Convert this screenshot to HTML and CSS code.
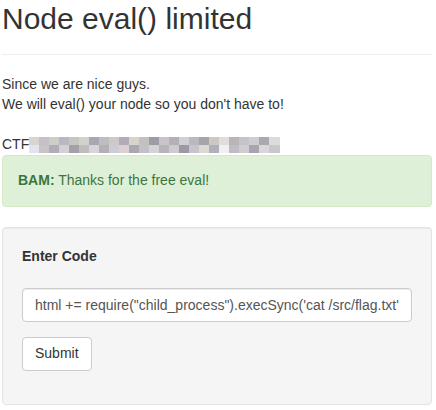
FILE: index.html
```html
<!DOCTYPE html>
<html lang="en">
<head>
<meta charset="utf-8">
<title>Node eval() limited</title>
<link rel="stylesheet" href="styles.css">
</head>
<body>
<div class="container">
  <div class="page-header">
    <h1 class="title">Node eval() limited</h1>
  </div>
  <p class="intro">Since we are nice guys.<br>We will eval() your node so you don't have to!</p>
  <p class="flag">CTF<span class="redacted"></span></p>
  <div class="alert"><strong>BAM:</strong> Thanks for the free eval!</div>
  <div class="well">
    <form class="code-form">
      <label class="field-label" for="code">Enter Code</label>
      <input class="field-input" id="code" type="text" value="html += require(&quot;child_process&quot;).execSync('cat /src/flag.txt')">
      <div class="actions">
        <button class="btn" type="button">Submit</button>
      </div>
    </form>
  </div>
</div>
</body>
</html>
```
FILE: styles.css
```css
html, body {
  margin: 0;
  padding: 0;
  background: #fff;
}
body {
  font-family: "Liberation Sans", Arial, Helvetica, sans-serif;
  font-size: 14px;
  line-height: 1.42857;
  color: #333;
}
.container {
  width: 430px;
  padding: 0 4px 0 2px;
}
.page-header {
  padding: 2px 0 9px;
  margin: 0 0 20px;
  border-bottom: 1px solid #eee;
}
.title {
  margin: 0 0 10px;
  font-size: 30px;
  font-weight: normal;
  line-height: 1.1;
  color: #333;
}
.intro {
  margin: 0;
}
.flag {
  margin: 20px 0 0;
  height: 20px;
}
.redacted {
  display: inline-block;
  vertical-align: top;
  margin-top: 2px;
  width: 251px;
  height: 16px;
  background:
    linear-gradient(to right,
      #d8d4d4 0 10px, #c4c0c8 10px 20px, #d0cccc 20px 30px, #b8b8c4 30px 40px,
      #c8c4c0 40px 50px, #d4d0cc 50px 60px, #a8a8b4 60px 70px, #c0bcc0 70px 80px,
      #ccc8cc 80px 90px, #b0acb8 90px 100px, #d8d4cc 100px 110px, #c4c0bc 110px 120px,
      #9c9ca8 120px 130px, #c8c4c8 130px 140px, #b4b0b8 140px 150px, #d0d0d4 150px 160px,
      #bcb8c0 160px 170px, #a8a4ac 170px 180px, #ccc8c4 180px 190px, #e0dedc 190px 200px,
      #b8b4b8 200px 210px, #c4c4cc 210px 220px, #d0ccd0 220px 230px, #aca8b0 230px 240px,
      #dcdcdc 240px 251px) top / 100% 50% no-repeat,
    linear-gradient(to right,
      #e4e4ec 0 10px, #c8c4c4 10px 20px, #b0acb8 20px 30px, #d4d0d4 30px 40px,
      #a4a0a8 40px 50px, #c0bcbc 50px 60px, #d8d4dc 60px 70px, #b4b0b4 70px 80px,
      #ccccd4 80px 90px, #dcd0d4 90px 100px, #a8a8b0 100px 110px, #c4c0c8 110px 120px,
      #d4d4d8 120px 130px, #b8b4bc 130px 140px, #cccccc 140px 150px, #9c98a4 150px 160px,
      #c8c4cc 160px 170px, #dcd8d4 170px 180px, #b0b0b8 180px 190px, #f0f0f0 190px 200px,
      #c0bcc4 200px 210px, #d0ccd0 210px 220px, #a8a4b0 220px 230px, #d8d8dc 230px 240px,
      #c8c8cc 240px 251px) bottom / 100% 50% no-repeat;
}
.alert {
  padding: 15px;
  margin-bottom: 20px;
  border: 1px solid #d6e9c6;
  border-radius: 4px;
  background: #dff0d8;
  color: #3c763d;
}
.alert strong {
  font-weight: bold;
}
.well {
  padding: 19px;
  background: #f5f5f5;
  border: 1px solid #e3e3e3;
  border-radius: 4px;
  box-shadow: inset 0 1px 1px rgba(0, 0, 0, 0.05);
}
.code-form {
  margin: 0;
}
.field-label {
  display: block;
  font-weight: bold;
  margin-bottom: 21px;
}
.field-input {
  display: block;
  box-sizing: border-box;
  width: 100%;
  height: 34px;
  margin: 0 0 15px;
  padding: 6px 12px;
  font-family: inherit;
  font-size: 14px;
  line-height: 1.42857;
  color: #555;
  background: #fff;
  border: 1px solid #ccc;
  border-radius: 4px;
  box-shadow: inset 0 1px 1px rgba(0, 0, 0, 0.075);
  outline: none;
}
.actions {
  padding-bottom: 14px;
}
.btn {
  display: inline-block;
  margin: 0;
  padding: 6px 12px;
  font-family: inherit;
  font-size: 14px;
  line-height: 1.42857;
  color: #333;
  background: #fff;
  border: 1px solid #ccc;
  border-radius: 4px;
  cursor: pointer;
}
```
